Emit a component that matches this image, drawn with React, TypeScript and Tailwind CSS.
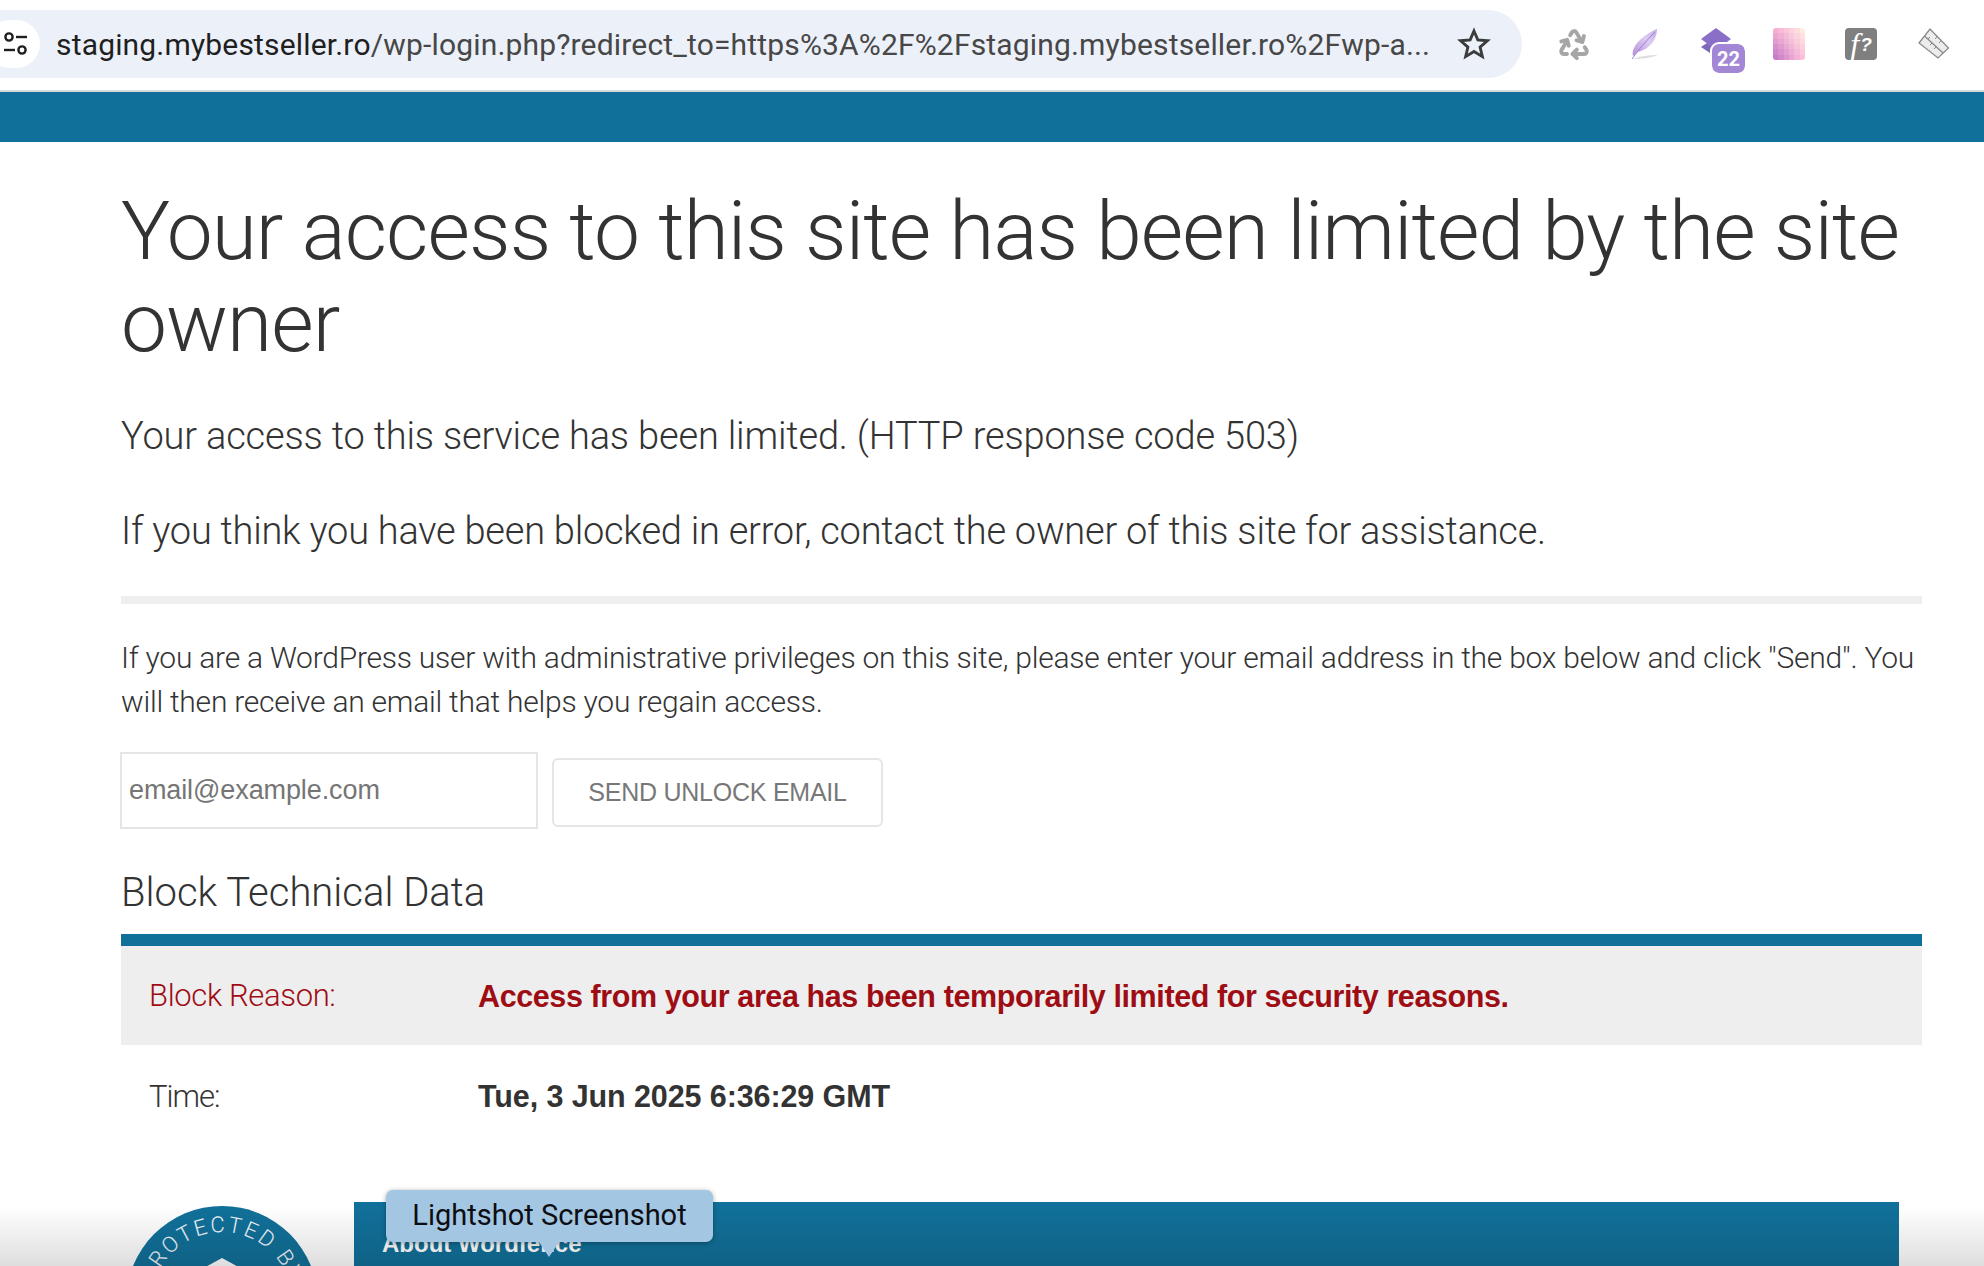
import React from "react";

const sans = "font-['Roboto','Liberation_Sans',sans-serif]";

function Tune() {
  return (
    <svg width="28" height="28" viewBox="0 0 28 28" fill="none" stroke="#1f1f1f" strokeWidth="2.4">
      <circle cx="8" cy="7" r="3.6" />
      <path d="M15 7h11" />
      <path d="M3 20h11" />
      <circle cx="21" cy="20" r="3.6" />
    </svg>
  );
}

function Star() {
  return (
    <svg width="34" height="34" viewBox="0 0 24 24" fill="none" stroke="#3c3c3c" strokeWidth="2" strokeLinejoin="miter">
      <path d="M12 2.8l2.7 6.3 6.8.6-5.2 4.5 1.6 6.7-5.9-3.6-5.9 3.6 1.6-6.7-5.2-4.5 6.8-.6z" />
    </svg>
  );
}

function Recycle() {
  return (
    <svg width="34" height="34" viewBox="0 0 24 24" fill="none" stroke="#a6a6a6" strokeWidth="2.8" strokeLinecap="round" strokeLinejoin="round" className="blur-[0.5px]">
      <path d="M7 19H4.8a1.8 1.8 0 0 1-1.6-.9 1.8 1.8 0 0 1 0-1.8l3.9-6.6" />
      <path d="M11 19h8.2a1.8 1.8 0 0 0 1.6-.9 1.8 1.8 0 0 0 0-1.8l-1.2-2" />
      <path d="m14 16-3 3 3 3" />
      <path d="M8.3 13.2 7.2 9.1 3.1 10.2" />
      <path d="m9.3 5.8 1.2-2a1.8 1.8 0 0 1 1.5-.9 1.8 1.8 0 0 1 1.6.9l3.9 6.6" />
      <path d="m13.8 9.4 4.1 1.1 1.1-4.1" />
    </svg>
  );
}

function Quill() {
  return (
    <svg width="28" height="32" viewBox="0 0 28 32" fill="none">
      <defs>
        <linearGradient id="q" x1="0" y1="1" x2="1" y2="0">
          <stop offset="0" stopColor="#b48fdb" />
          <stop offset="0.6" stopColor="#dccdf2" />
          <stop offset="1" stopColor="#c3a9e6" />
        </linearGradient>
      </defs>
      <path d="M2 28C0 19 10 8 26 1 26 11 19 21 7 24z" fill="url(#q)" />
      <path d="M1 31C7 22 15 13 24 4" stroke="#a27fd2" strokeWidth="1" />
      <path d="M2 31c7-3 17-4 25-4-8 3-17 4-25 4z" fill="#dedede" />
    </svg>
  );
}

function Stack() {
  return (
    <div className="relative h-[46px] w-[46px]">
      <svg width="32" height="30" viewBox="0 0 32 30" className="absolute left-0 top-0">
        <path d="M16 0l15 11-15 11L1 11z" fill="#8a6fc8" />
        <path d="M1 19l6-4 9 7 9-7 6 4-15 10z" fill="#7c69b8" />
      </svg>
      <div className="absolute left-[12px] top-[16px] flex h-[29px] w-[33px] items-center justify-center rounded-[7px] bg-[#a387d6] font-['Roboto',sans-serif] text-[20px] font-bold text-white outline-2 outline-white">
        22
      </div>
    </div>
  );
}

const cells = Array.from({ length: 36 }, (_, i) => {
  const u = (i % 6) / 5;
  const v = Math.floor(i / 6) / 5;
  const mix = (tl: number, tr: number, bl: number, br: number) =>
    Math.round(tl * (1 - u) * (1 - v) + tr * u * (1 - v) + bl * (1 - u) * v + br * u * v);
  return `rgb(${mix(246, 255, 198, 253)},${mix(174, 234, 123, 191)},${mix(210, 228, 200, 216)})`;
});

function PinkGrid() {
  return (
    <div className="grid h-[32px] w-[32px] grid-cols-6 overflow-hidden rounded-[3px]">
      {cells.map((c, i) => (
        <div key={i} style={{ backgroundColor: c }} />
      ))}
    </div>
  );
}

function FontIcon() {
  return (
    <div className="flex h-[32px] w-[32px] items-center justify-center overflow-hidden rounded-[4px] bg-[#7f7f7f] text-white">
      <span className="font-['Liberation_Serif',serif] text-[32px] italic leading-none">f</span>
      <span className="ml-[1px] font-['Liberation_Sans',sans-serif] text-[19px] font-bold italic leading-none">?</span>
    </div>
  );
}

function Ruler() {
  return (
    <svg width="32" height="32" viewBox="0 0 32 32" fill="none" stroke="#8a8a8a" strokeWidth="1.3">
      <path d="M1 15L12 1l18.500 19-10.500 10z" fill="#ececec" />
      <path d="M6.500 8L25 25" />
      <path d="M12 17l2-2M16 21l2-2M10 11l2-2M17 11l2-2M21 15l2-2" strokeWidth="1" />
    </svg>
  );
}

function Seal() {
  return (
    <svg width="192" height="192" viewBox="0 0 192 192" className="block">
      <circle cx="96" cy="96" r="96" fill="#117099" />
      <defs>
        <path id="arc" d="M26 96a70 70 0 0 1 140 0" />
      </defs>
      <text fill="#f0f6fa" fontSize="22" letterSpacing="2.400" fontFamily="Roboto, sans-serif" fontWeight="300" textAnchor="middle">
        <textPath href="#arc" startOffset="50%">PROTECTED BY</textPath>
      </text>
      <path d="M96 52l44 24v40l-44 30-44-30V76z" fill="#fff" />
    </svg>
  );
}

export default function App() {
  return (
    <div className="relative h-[1266px] w-[1984px] overflow-hidden bg-white font-['Roboto','Liberation_Sans',sans-serif] font-light text-[#333]">
      <header className="flex h-[90px] items-start pt-[10px]">
        <div className="flex h-[68px] w-[1522px] shrink-0 items-center rounded-r-[34px] bg-[#ecf0f9]">
          <div className="ml-[-14px] flex h-[48px] w-[54px] shrink-0 items-center justify-center rounded-full bg-white pl-[4px]">
            <Tune />
          </div>
          <div className={`ml-[16px] w-[1384px] shrink-0 whitespace-nowrap text-[30px] font-normal tracking-[0.17px] text-[#474747] ${sans}`}>
            <span className="text-[#1f1f1f]">staging.mybestseller.ro</span>/wp-login.php?redirect_to=https%3A%2F%2Fstaging.mybestseller.ro%2Fwp-a...
          </div>
          <div className="ml-[17px] shrink-0"><Star /></div>
        </div>
        <div className="flex h-[68px] items-center">
          <div className="ml-[35px] shrink-0"><Recycle /></div>
          <div className="ml-[40px] shrink-0"><Quill /></div>
          <div className="ml-[41px] shrink-0 pt-[14px]"><Stack /></div>
          <div className="ml-[27px] shrink-0"><PinkGrid /></div>
          <div className="ml-[40px] shrink-0"><FontIcon /></div>
          <div className="ml-[41px] shrink-0"><Ruler /></div>
        </div>
      </header>
      <div className="h-[2px] bg-[#d5dadd]" />
      <div className="h-[50px] bg-[#117099]" />

      <main className="ml-[121px] w-[1801px]">
        <h1 className="mt-[43px] text-[82px] leading-[92px] tracking-[-0.9px]">
          Your access to this site has been limited by the site owner
        </h1>
        <p className="mt-[44px] text-[38px] leading-[46px] tracking-[-0.17px]">
          Your access to this service has been limited. (HTTP response code 503)
        </p>
        <p className="mt-[49px] text-[38px] leading-[46px] tracking-[-0.24px]">
          If you think you have been blocked in error, contact the owner of this site for assistance.
        </p>
        <hr className="mt-[42px] h-[8px] border-0 bg-[#eeeeee]" />
        <p className="mt-[32px] text-[30px] leading-[44px] tracking-[-0.24px]">
          If you are a WordPress user with administrative privileges on this site, please enter your email address in the box below and click "Send". You will then receive an email that helps you regain access.
        </p>
        <div className="mt-[28px] flex items-start">
          <input
            readOnly
            placeholder="email@example.com"
            className="ml-[-1px] h-[77px] w-[418px] border-2 border-[#e5e5e5] px-[7px] font-['Liberation_Sans',sans-serif] text-[27px] font-normal tracking-[-0.1px] placeholder:text-[#757575]"
          />
          <div className="ml-[14px] mt-[6px] flex h-[69px] w-[331px] items-center justify-center rounded-[6px] border-2 border-[#e5e5e5] font-['Liberation_Sans',sans-serif] text-[25px] font-normal tracking-[-0.25px] text-[#777]">
            SEND UNLOCK EMAIL
          </div>
        </div>
        <h2 className="mt-[39px] text-[40px] leading-[50px]">Block Technical Data</h2>
        <div className="mt-[16px] h-[12px] bg-[#117099]" />
        <div className="flex h-[99px] items-center bg-[#eeeeee] pt-[2px] text-[#9f0d14]">
          <div className="w-[357px] pl-[28px] text-[31px] tracking-[-0.35px]">Block Reason:</div>
          <div className="font-['Liberation_Sans',sans-serif] text-[30.5px] font-bold tracking-[-0.4px]">
            Access from your area has been temporarily limited for security reasons.
          </div>
        </div>
        <div className="flex h-[102px] items-center pt-[2px]">
          <div className="w-[357px] pl-[28px] text-[31px] tracking-[-1px]">Time:</div>
          <div className="font-['Liberation_Sans',sans-serif] text-[30.5px] font-bold tracking-[-0.1px]">
            Tue, 3 Jun 2025 6:36:29 GMT
          </div>
        </div>
        <div className="mt-[55px] flex items-start">
          <div className="ml-[5px] mt-[4px] w-[192px] shrink-0"><Seal /></div>
          <div className="ml-[36px] h-[200px] w-[1545px] shrink-0 bg-[#117099] pl-[28px] pt-[23px] font-['Liberation_Sans',sans-serif] text-[24px] font-bold leading-[38px] text-white">
            About Wordfence
          </div>
        </div>
      </main>

      <div className="absolute bottom-0 left-0 right-0 h-[60px] bg-[linear-gradient(to_bottom,rgba(0,0,0,0),rgba(0,0,0,0.13))]" />

      <div className="absolute left-[386px] top-[1190px] flex h-[52px] w-[327px] items-center justify-center rounded-[7px] bg-[#a3c7e2] font-['Roboto',sans-serif] text-[29px] font-normal text-[#0d0d14] shadow-[0_1px_5px_rgba(0,0,0,0.35)]">
        Lightshot Screenshot
        <div className="absolute left-[153px] top-[52px] h-0 w-0 border-x-[10px] border-t-[15px] border-x-transparent border-t-[#a3c7e2]" />
      </div>
    </div>
  );
}
